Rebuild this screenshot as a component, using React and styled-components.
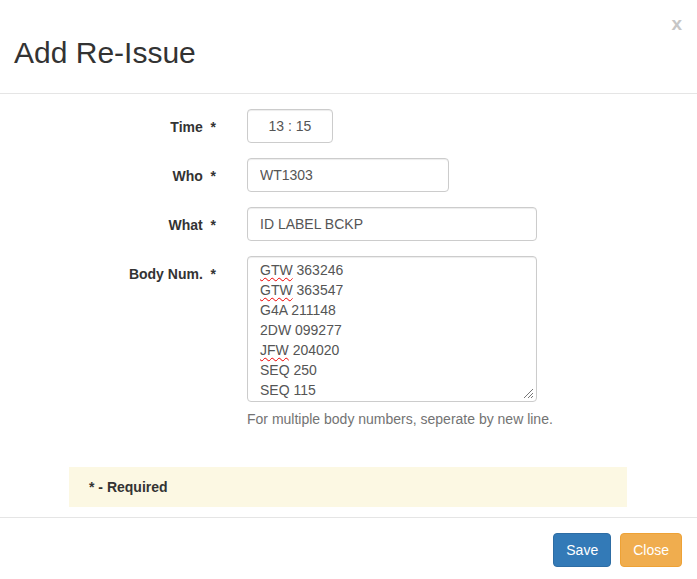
import React from 'react'
import { styled, createGlobalStyle } from 'styled-components'

const GlobalStyle = createGlobalStyle`
  html, body {
    margin: 0;
    padding: 0;
    background: #fff;
  }
  body {
    font-family: "Liberation Sans", Arial, sans-serif;
    font-size: 14px;
    line-height: 20px;
    color: #333;
  }
  * { box-sizing: border-box; }
`

const BODY_NUMS = [
  { code: 'GTW', num: '363246', typo: true },
  { code: 'GTW', num: '363547', typo: true },
  { code: 'G4A', num: '211148' },
  { code: '2DW', num: '099277' },
  { code: 'JFW', num: '204020', typo: true },
  { code: 'SEQ', num: '250' },
  { code: 'SEQ', num: '115' },
]

const App = () => {
  return (
    <Modal>
      <GlobalStyle />
      <Header>
        <Title>Add Re-Issue</Title>
        <CloseX>x</CloseX>
      </Header>
      <Body>
        <Row>
          <Label>Time&nbsp; *</Label>
          <Input $width={86} $center defaultValue="13 : 15" />
        </Row>
        <Row>
          <Label>Who&nbsp; *</Label>
          <Input $width={202} defaultValue="WT1303" />
        </Row>
        <Row>
          <Label>What&nbsp; *</Label>
          <Input $width={290} defaultValue="ID LABEL BCKP" />
        </Row>
        <Row>
          <Label>Body Num.&nbsp; *</Label>
          <Field>
            <TextBox role="textbox" aria-multiline="true">
              {BODY_NUMS.map((b, i) => (
                <Line key={i}>
                  {b.typo ? <Typo>{b.code}</Typo> : b.code} {b.num}
                </Line>
              ))}
              <Grip width="12" height="12" viewBox="0 0 12 12">
                <path d="M11 2 L2 11 M11 6 L6 11 M11 9 L9 11" stroke="#777" strokeWidth="1" fill="none" />
              </Grip>
            </TextBox>
            <Help>For multiple body numbers, seperate by new line.</Help>
          </Field>
        </Row>
        <Required>* - Required</Required>
      </Body>
      <Footer>
        <Button $variant="primary">Save</Button>
        <Button $variant="warning">Close</Button>
      </Footer>
    </Modal>
  )
}

const Modal = styled.div`
  width: 697px;
  min-height: 579px;
  background: #fff;
  position: relative;
`
const Header = styled.div`
  padding: 36px 14px 24px;
  border-bottom: 1px solid #e5e5e5;
`
const Title = styled.h3`
  margin: 0;
  font-size: 30px;
  font-weight: 400;
  line-height: 33px;
  color: #333;
`
const CloseX = styled.button`
  position: absolute;
  top: 12px;
  right: 15px;
  border: 0;
  background: none;
  padding: 0;
  font-family: "Liberation Sans", Arial, sans-serif;
  font-size: 19px;
  font-weight: bold;
  line-height: 24px;
  color: #c6c6c6;
  cursor: pointer;
`
const Body = styled.div`
  padding: 15px 0 10px;
`
const Row = styled.div`
  display: flex;
  align-items: flex-start;
  margin-bottom: 15px;
`
const Label = styled.label`
  width: 216px;
  margin-right: 31px;
  padding-top: 8px;
  text-align: right;
  font-weight: bold;
  color: #333;
`
const Input = styled.input`
  width: ${p => p.$width}px;
  height: 34px;
  padding: 6px 12px;
  border: 1px solid #ccc;
  border-radius: 4px;
  box-shadow: inset 0 1px 1px rgba(0,0,0,.075);
  font-family: inherit;
  font-size: 14px;
  color: #555;
  text-align: ${p => (p.$center ? 'center' : 'left')};
  outline: none;
`
const Field = styled.div`
  display: flex;
  flex-direction: column;
`
const TextBox = styled.div`
  position: relative;
  width: 290px;
  height: 146px;
  padding: 3px 12px;
  border: 1px solid #ccc;
  border-radius: 4px;
  box-shadow: inset 0 1px 1px rgba(0,0,0,.075);
  color: #555;
  overflow: hidden;
`
const Line = styled.div`
  line-height: 20px;
  white-space: pre;
`
const Typo = styled.span`
  text-decoration: underline wavy #e00;
  text-decoration-thickness: 1px;
  text-underline-offset: 2px;
`
const Grip = styled.svg`
  position: absolute;
  right: 2px;
  bottom: 2px;
`
const Help = styled.span`
  margin-top: 7px;
  color: #737373;
`
const Required = styled.div`
  margin: 38px 70px 0 69px;
  padding: 10px 20px;
  background: #fcf8e3;
  font-weight: bold;
  color: #333;
`
const Footer = styled.div`
  display: flex;
  justify-content: flex-end;
  gap: 9px;
  padding: 15px 15px 15px;
  border-top: 1px solid #e5e5e5;
`
const Button = styled.button`
  height: 34px;
  padding: 6px 12px;
  border-radius: 4px;
  font-family: inherit;
  font-size: 14px;
  line-height: 20px;
  color: #fff;
  cursor: pointer;
  background: ${p => (p.$variant === 'primary' ? '#337ab7' : '#f0ad4e')};
  border: 1px solid ${p => (p.$variant === 'primary' ? '#2e6da4' : '#eea236')};
`

export default App
